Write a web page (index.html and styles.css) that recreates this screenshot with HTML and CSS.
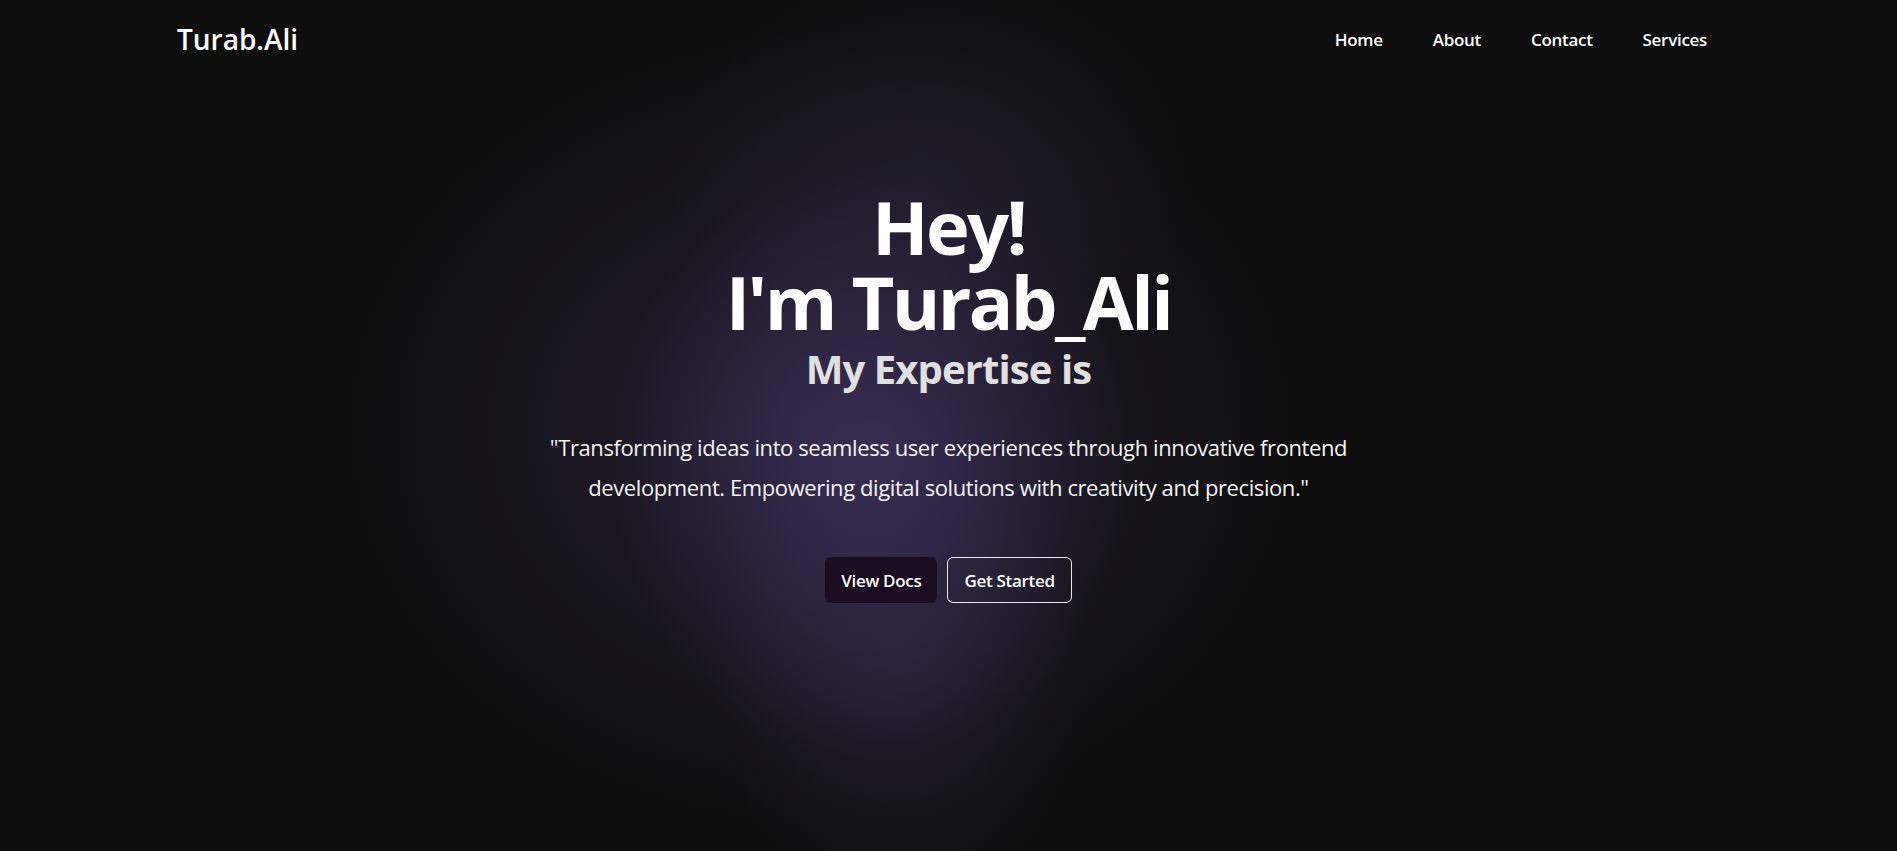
FILE: index.html
```html
<!DOCTYPE html>
<html lang="en">
<head>
<meta charset="utf-8">
<title>Turab.Ali</title>
<link rel="stylesheet" href="styles.css">
</head>
<body>
<div class="page">
  <header class="header">
    <a class="logo" href="#">Turab.Ali</a>
    <nav class="nav">
      <a href="#">Home</a>
      <a href="#">About</a>
      <a href="#">Contact</a>
      <a href="#">Services</a>
    </nav>
  </header>
  <main class="hero">
    <h1 class="title"><span class="line">Hey!</span><span class="line">I'm Turab_Ali</span></h1>
    <h2 class="subtitle">My Expertise is</h2>
    <p class="lead">"Transforming ideas into seamless user experiences through innovative frontend development. Empowering digital solutions with creativity and precision."</p>
    <div class="actions">
      <a class="btn btn-primary" href="#">View Docs</a>
      <a class="btn btn-outline" href="#">Get Started</a>
    </div>
  </main>
</div>
</body>
</html>
```

FILE: styles.css
```css
* { box-sizing: border-box; }
html, body { margin: 0; padding: 0; }
body {
  background: #0e0e0e;
  color: #fff;
  font-family: "Open Sans", "Noto Sans", sans-serif;
  height: 851px;
  overflow: hidden;
}
a { color: inherit; text-decoration: none; }
.page {
  min-height: 851px;
  background:
    radial-gradient(ellipse 260px 300px at 870px 460px, rgba(64, 52, 96, 0.7), rgba(64, 52, 96, 0) 100%),
    radial-gradient(ellipse 480px 400px at 820px 430px, rgba(52, 43, 76, 0.6), rgba(52, 43, 76, 0) 100%),
    radial-gradient(ellipse 190px 260px at 900px 660px, rgba(45, 38, 65, 0.55), rgba(45, 38, 65, 0) 100%),
    radial-gradient(ellipse 260px 200px at 930px 170px, rgba(40, 36, 55, 0.5), rgba(40, 36, 55, 0) 100%),
    #0e0e0e;
}
.header {
  height: 78px;
  display: flex;
  align-items: center;
  justify-content: space-between;
  padding: 0 190px 0 177px;
}
.logo {
  font-size: 28px;
  font-weight: 600;
  letter-spacing: 0;
}
.nav {
  display: flex;
  gap: 50px;
}
.nav a {
  font-size: 17px;
  font-weight: 600;
  letter-spacing: -0.3px;
}
.hero {
  display: flex;
  flex-direction: column;
  align-items: center;
  text-align: center;
  padding-top: 111px;
}
.title {
  margin: 0;
  font-size: 74px;
  line-height: 75px;
  font-weight: 700;
  letter-spacing: -2.6px;
  display: flex;
  flex-direction: column;
  align-items: center;
}
.line { display: block; }
.subtitle {
  margin: 6px 0 0;
  font-size: 40px;
  line-height: 48px;
  font-weight: 700;
  color: #e0e0e0;
  letter-spacing: -0.9px;
}
.lead {
  margin: 34px 0 0;
  max-width: 840px;
  font-size: 22px;
  line-height: 40px;
  color: #f4f4f4;
  letter-spacing: -0.4px;
}
.actions {
  margin-top: 50px;
  display: flex;
  gap: 10px;
}
.btn {
  height: 46px;
  display: inline-flex;
  align-items: center;
  padding: 0 16px;
  border-radius: 6px;
  font-size: 17px;
  font-weight: 600;
  letter-spacing: -0.3px;
}
.btn-primary {
  background: #1a0c21;
}
.btn-outline {
  border: 1px solid #e8e8e8;
}
```
